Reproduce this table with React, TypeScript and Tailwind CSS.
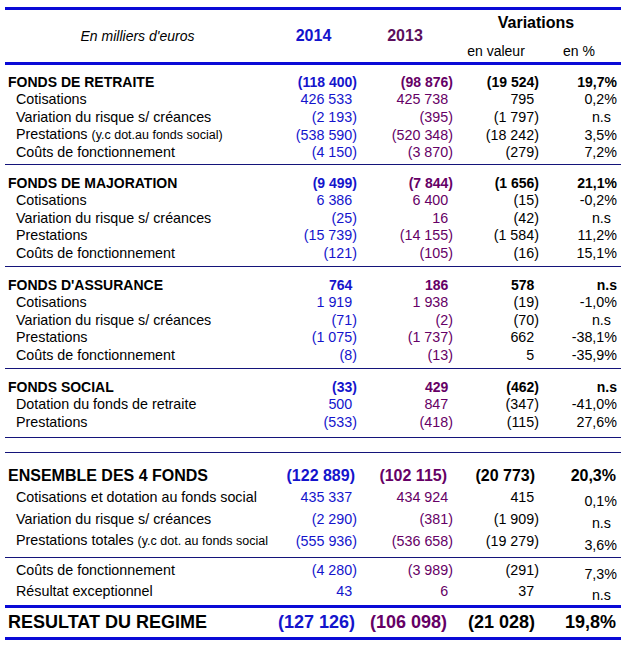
import React from "react";

type Row = {
    label: React.ReactNode;
    a: string;
    b: string;
    c: string;
    d: string;
};

type Section = {
    head: Row;
    rows: Row[];
};

const small = (t: string) => <span className="text-[12.5px]">{t}</span>;

const sections: Section[] = [
    {
        head: { label: "FONDS DE RETRAITE", a: "(118 400)", b: "(98 876)", c: "(19 524)", d: "19,7%" },
        rows: [
            { label: "Cotisations", a: "426 533", b: "425 738", c: "795", d: "0,2%" },
            { label: "Variation du risque s/ créances", a: "(2 193)", b: "(395)", c: "(1 797)", d: "n.s" },
            {
                label: <>Prestations {small("(y.c dot.au fonds social)")}</>,
                a: "(538 590)",
                b: "(520 348)",
                c: "(18 242)",
                d: "3,5%",
            },
            { label: "Coûts de fonctionnement", a: "(4 150)", b: "(3 870)", c: "(279)", d: "7,2%" },
        ],
    },
    {
        head: { label: "FONDS DE MAJORATION", a: "(9 499)", b: "(7 844)", c: "(1 656)", d: "21,1%" },
        rows: [
            { label: "Cotisations", a: "6 386", b: "6 400", c: "(15)", d: "-0,2%" },
            { label: "Variation du risque s/ créances", a: "(25)", b: "16", c: "(42)", d: "n.s" },
            { label: "Prestations", a: "(15 739)", b: "(14 155)", c: "(1 584)", d: "11,2%" },
            { label: "Coûts de fonctionnement", a: "(121)", b: "(105)", c: "(16)", d: "15,1%" },
        ],
    },
    {
        head: { label: "FONDS D'ASSURANCE", a: "764", b: "186", c: "578", d: "n.s" },
        rows: [
            { label: "Cotisations", a: "1 919", b: "1 938", c: "(19)", d: "-1,0%" },
            { label: "Variation du risque s/ créances", a: "(71)", b: "(2)", c: "(70)", d: "n.s" },
            { label: "Prestations", a: "(1 075)", b: "(1 737)", c: "662", d: "-38,1%" },
            { label: "Coûts de fonctionnement", a: "(8)", b: "(13)", c: "5", d: "-35,9%" },
        ],
    },
    {
        head: { label: "FONDS SOCIAL", a: "(33)", b: "429", c: "(462)", d: "n.s" },
        rows: [
            { label: "Dotation du fonds de retraite", a: "500", b: "847", c: "(347)", d: "-41,0%" },
            { label: "Prestations", a: "(533)", b: "(418)", c: "(115)", d: "27,6%" },
        ],
    },
];

const ensemble: Row[] = [
    { label: "Cotisations et dotation au fonds social", a: "435 337", b: "434 924", c: "415", d: "0,1%" },
    { label: "Variation du risque s/ créances", a: "(2 290)", b: "(381)", c: "(1 909)", d: "n.s" },
    {
        label: <>Prestations totales {small("(y.c dot. au fonds social")}</>,
        a: "(555 936)",
        b: "(536 658)",
        c: "(19 279)",
        d: "3,6%",
    },
];

const extra: Row[] = [
    { label: "Coûts de fonctionnement", a: "(4 280)", b: "(3 989)", c: "(291)", d: "7,3%" },
    { label: "Résultat exceptionnel", a: "43", b: "6", c: "37", d: "n.s" },
];

// positive numbers keep the room of the closing parenthesis
function Num({ v }: { v: string }) {
    if (v.startsWith("(")) return <>{v}</>;
    return (
        <>
            {v}
            <span className="invisible">)</span>
        </>
    );
}

const grid = "grid grid-cols-[265px_87px_96px_86px_80px] items-center";

function Line({ row, head, shift, className }: { row: Row; head?: boolean; shift?: boolean; className: string }) {
    const ns = row.d === "n.s" && !head;
    return (
        <div className={`${grid} ${className} ${head ? "font-bold text-[14px]" : "text-[14.3px]"}`}>
            <div className={head ? "pl-[3px] whitespace-nowrap" : "pl-[11px] whitespace-nowrap"}>{row.label}</div>
            <div className="text-right text-[#1414cc]">
                <Num v={row.a} />
            </div>
            <div className="text-right text-[#660066]">
                <Num v={row.b} />
            </div>
            <div className="text-right">
                <Num v={row.c} />
            </div>
            <div className={`text-right ${ns ? "pr-[8px]" : "pr-[2px]"} ${shift ? "translate-y-[4px]" : ""}`}>{row.d}</div>
        </div>
    );
}

function BigLine({ row, className }: { row: Row; className: string }) {
    return (
        <div className={`${grid} ${className} font-bold`}>
            <div className="pl-[3px] whitespace-nowrap">{row.label}</div>
            <div className="text-right pr-[2px] text-[#1414cc]">{row.a}</div>
            <div className="text-right pr-[6px] text-[#660066]">{row.b}</div>
            <div className="text-right pr-[4px]">{row.c}</div>
            <div className="text-right pr-[3px]">{row.d}</div>
        </div>
    );
}

export default function App() {
    return (
        <div className="w-[628px] h-[645px] bg-white pt-[7px] pl-[5px] text-black font-['Liberation_Sans',Arial,sans-serif]">
            <div className="w-[616px]">
                <div className="h-[3px] bg-[#0a0ad6]" />

                {/* header */}
                <div className="grid grid-cols-[265px_87px_96px_86px_80px] grid-rows-[26px_26px]">
                    <div className="row-span-2 flex items-center justify-center text-[14px] italic">
                        En milliers d'euros
                    </div>
                    <div className="row-span-2 flex items-center justify-center text-[16px] font-bold text-[#1414cc]">
                        2014
                    </div>
                    <div className="row-span-2 flex items-center justify-center text-[16px] font-bold text-[#5c0e5c]">
                        2013
                    </div>
                    <div className="col-span-2 flex items-center justify-center text-[16px] font-bold">Variations</div>
                    <div className="flex items-end justify-center pb-[2px] text-[14px] leading-[17px]">en valeur</div>
                    <div className="flex items-end justify-center pb-[2px] text-[14px] leading-[17px]">en %</div>
                </div>

                <div className="h-[3px] bg-[#0a0ad6]" />

                {sections.map((s, i) => (
                    <div key={i}>
                        {i > 0 && <div className="h-px bg-[#14147a]" />}
                        <div className={`${i === 0 ? "pt-[8px]" : "pt-[9px]"} ${i === 3 ? "pb-[6px]" : i === 0 ? "pb-[3px]" : "pb-[4px]"}`}>
                            <Line row={s.head} head className="h-[18px] leading-[18px]" />
                            {s.rows.map((r, j) => (
                                <Line key={j} row={r} className="h-[17.5px] leading-[17.5px]" />
                            ))}
                        </div>
                    </div>
                ))}

                <div className="h-px bg-[#14147a]" />
                <div className="h-[14px]" />
                <div className="h-px bg-[#14147a]" />

                <div className="pt-[12px] pb-[5.5px]">
                    <BigLine row={{ label: "ENSEMBLE DES 4 FONDS", a: "(122 889)", b: "(102 115)", c: "(20 773)", d: "20,3%" }} className="h-[22px] text-[16px] leading-[22px]" />
                    {ensemble.map((r, j) => (
                        <Line key={j} row={r} shift className="h-[21.5px] leading-[21.5px]" />
                    ))}
                </div>

                <div className="h-px bg-[#14147a]" />

                <div className="pt-[2px] pb-[4px]">
                    {extra.map((r, j) => (
                        <Line key={j} row={r} shift className="h-[20.5px] leading-[20.5px]" />
                    ))}
                </div>

                <div className="h-[3px] bg-[#0a0ad6]" />
                <BigLine row={{ label: "RESULTAT DU REGIME", a: "(127 126)", b: "(106 098)", c: "(21 028)", d: "19,8%" }} className="h-[29px] text-[18px] leading-[29px]" />
                <div className="h-[3px] bg-[#0a0ad6]" />
            </div>
        </div>
    );
}
